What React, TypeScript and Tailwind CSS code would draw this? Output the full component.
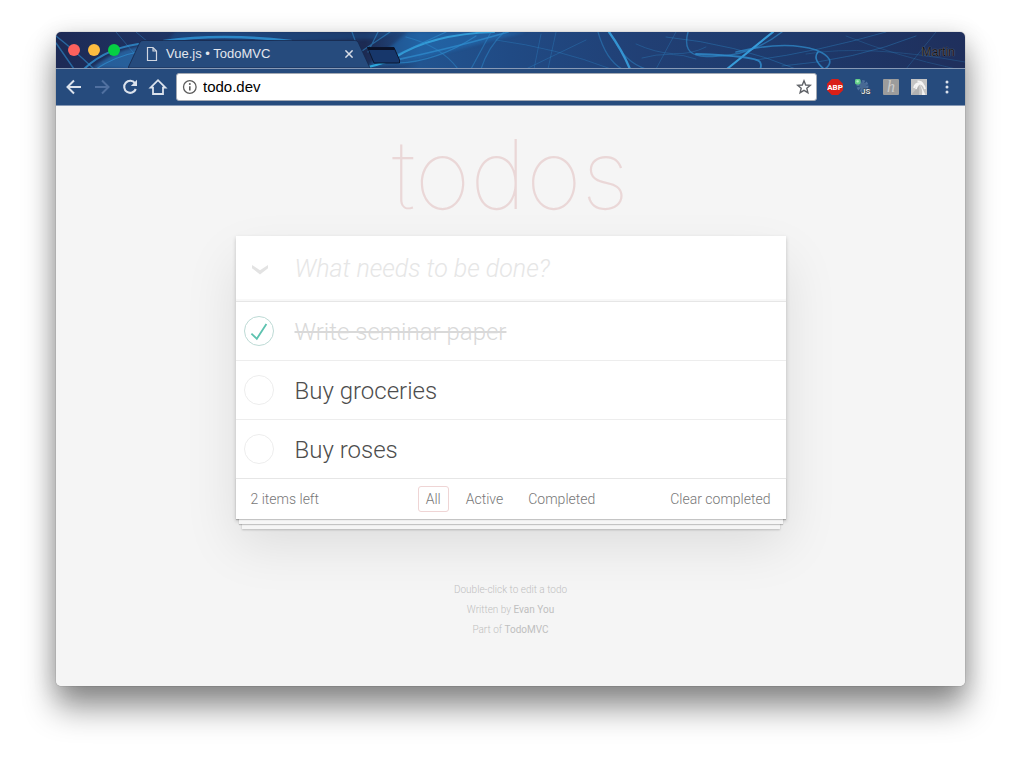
import { useState } from "react";

type Todo = { id: number; title: string; done: boolean };
type Filter = "All" | "Active" | "Completed";

const FILTERS: Filter[] = ["All", "Active", "Completed"];

function StripArtwork() {
  return (
    <svg
      className="absolute inset-0 h-full w-full"
      viewBox="0 0 909 37"
      preserveAspectRatio="xMinYMin slice"
      aria-hidden="true"
    >
      <defs>
        <linearGradient id="sky" x1="0" x2="1" y1="0" y2="0">
          <stop offset="0" stopColor="#1d2a55" />
          <stop offset="0.2" stopColor="#1f3a6c" />
          <stop offset="0.34" stopColor="#1c2a52" />
          <stop offset="0.4" stopColor="#225490" />
          <stop offset="0.5" stopColor="#204a84" />
          <stop offset="0.65" stopColor="#213f74" />
          <stop offset="0.8" stopColor="#1e3a6c" />
          <stop offset="1" stopColor="#1f2f5c" />
        </linearGradient>
        <filter id="soft" x="-5%" y="-50%" width="110%" height="200%">
          <feGaussianBlur stdDeviation="1.6" />
        </filter>
        <filter id="strand" x="-5%" y="-50%" width="110%" height="200%">
          <feGaussianBlur stdDeviation="0.6" />
        </filter>
      </defs>
      <rect width="909" height="37" fill="url(#sky)" />
      <path d="M308 37 L352 0 H470 L345 32 Z" fill="#2470b5" opacity=".5" filter="url(#soft)" />
      <path d="M36 36 Q62 16 88 14 L75 37 Z" fill="#2d7fc4" opacity=".6" filter="url(#soft)" />
      <path d="M110 9 Q160 2 240 9 L320 7 L340 0 H120Z" fill="#1f5a98" opacity=".4" filter="url(#soft)" />
      <g fill="none" stroke="#2f8fd0" strokeLinecap="round" filter="url(#strand)">
        <path d="M0 11 L18 37 M0 4 Q18 18 38 37" strokeWidth="1.4" opacity=".6" />
        <path d="M28 37 Q52 14 92 11" strokeWidth="2" opacity=".8" />
        <path d="M40 37 Q60 24 82 20" strokeWidth="1.2" opacity=".7" />
        <path d="M60 0 L82 26 M80 0 L92 10" strokeWidth="1" opacity=".4" />
        <path d="M108 9 Q165 1 235 9" strokeWidth="2.4" opacity=".9" />
        <path d="M303 21 L334 0 M312 20 L322 0 M296 0 L304 22" strokeWidth="1.2" opacity=".55" />
        <path d="M306 36 Q320 34 338 27" strokeWidth="2.4" stroke="#2fb0e4" opacity=".9" />
        <path d="M338 26 Q375 2 438 0" strokeWidth="2.2" stroke="#38b0e8" opacity=".75" />
        <path d="M340 28 Q405 14 452 0" strokeWidth="1.8" opacity=".7" />
        <path d="M338 24 L390 0 M342 31 Q380 30 420 4" strokeWidth="1.2" opacity=".6" />
        <path d="M350 5 Q385 14 402 37 M415 37 L435 0 M425 37 Q432 15 448 0" strokeWidth="1.2" opacity=".45" />
        <path d="M470 37 L530 8 M485 2 L478 37 M500 0 L492 37 M440 8 Q500 16 555 37" strokeWidth="1" opacity=".3" />
        <path d="M553 0 Q566 18 574 37" strokeWidth="2.2" stroke="#3aa6e4" opacity=".85" />
        <path d="M556 4 Q568 30 590 37 M542 0 Q550 28 566 37" strokeWidth="1.2" opacity=".45" />
        <path d="M586 26 Q615 18 640 27 M600 37 L620 0 M580 12 Q620 30 650 15" strokeWidth="1" opacity=".3" />
        <path d="M632 0 Q626 22 645 24 Q690 28 726 0" strokeWidth="1.4" opacity=".6" />
        <path d="M671 37 L717 0" strokeWidth="2.2" stroke="#3aa6e4" opacity=".9" />
        <path d="M640 22 Q700 24 704 30 Q706 34 704 37" strokeWidth="1.8" opacity=".8" />
        <path d="M680 20 Q730 8 760 18 Q782 27 769 37" strokeWidth="1.6" opacity=".7" />
        <path d="M762 20 Q756 27 768 37" strokeWidth="1.6" opacity=".8" />
        <path d="M610 5 Q680 12 740 37 M700 28 Q760 20 830 0 M726 34 Q800 28 860 4" strokeWidth="1" opacity=".35" />
        <path d="M750 22 Q810 12 909 30 M790 4 Q840 24 900 37 M850 37 L880 0" strokeWidth="1" opacity=".25" />
      </g>
      <path d="M311.500 15.500 H338 L343.500 28 V31 H318 Z" fill="#17376b" stroke="#0b1730" strokeWidth="1" />
      <path d="M311.500 15.500 H338 L339 18 H312.500 Z" fill="#0a1228" />
    </svg>
  );
}

function TabStrip() {
  return (
    <div className="relative flex h-9 items-end">
      <StripArtwork />
      <div className="relative flex h-9 w-18 items-center gap-2 pl-3">
        <button aria-label="Close window" className="size-3 rounded-full bg-[#fc615d]" />
        <button aria-label="Minimise window" className="size-3 rounded-full bg-[#fdbc40]" />
        <button aria-label="Zoom window" className="size-3 rounded-full bg-[#06cf43]" />
      </div>
      <div className="relative h-7 w-61">
        <svg className="absolute inset-0 h-full w-full" viewBox="0 0 244 28" preserveAspectRatio="none" aria-hidden="true">
          <path d="M0 28 L12 2 Q13 0.500 15 0.500 H227 Q229 0.500 230 2 L242 28 Z" fill="#264b7d" stroke="#16284c" strokeWidth=".8" />
        </svg>
        <div className="relative flex h-full items-center pl-[18px] pr-[17px] text-[#e3e7ee]">
          <svg className="h-4 w-3" viewBox="0 0 12 16" fill="none" stroke="#d0d6e0" strokeWidth="1.2" aria-hidden="true">
            <path d="M1.500 1.500 H7 L10.500 5 V14.500 H1.500 Z M7 1.500 V5 H10.500" />
          </svg>
          <span className="ml-2 flex-1 text-[13px] leading-4">Vue.js • TodoMVC</span>
          <button aria-label="Close tab" className="flex size-3 items-center justify-center">
            <svg className="size-2" viewBox="0 0 8 8" stroke="#d8dde6" strokeWidth="1.5" aria-hidden="true">
              <path d="M0.400 0.400 L7.600 7.600 M7.600 0.400 L0.400 7.600" />
            </svg>
          </button>
        </div>
      </div>
      <span className="relative mb-2 ml-auto mr-2.5 text-[12px] leading-4 text-[#10131a] [text-shadow:0_0_1px_#a8a294]">Martin</span>
    </div>
  );
}

function Toolbar() {
  return (
    <div className="flex h-9 items-center bg-[#264b7d] pl-2 pr-2.5">
      <div className="flex items-center gap-2">
        <button aria-label="Back" className="size-5">
          <svg viewBox="0 0 20 20" fill="none" stroke="#dbe2ec" strokeWidth="2" aria-hidden="true">
            <path d="M17 10 H4 M10 3.500 L3.500 10 L10 16.500" />
          </svg>
        </button>
        <button aria-label="Forward" className="size-5">
          <svg viewBox="0 0 20 20" fill="none" stroke="#5070a0" strokeWidth="2" aria-hidden="true">
            <path d="M3 10 H16 M10 3.500 L16.500 10 L10 16.500" />
          </svg>
        </button>
        <button aria-label="Reload" className="size-5">
          <svg viewBox="0 0 20 20" fill="none" aria-hidden="true">
            <path d="M15 6.200 A6 6 0 1 0 15.800 12" stroke="#dbe2ec" strokeWidth="2.1" />
            <path d="M17 2.800 V9 H10.800 Z" fill="#dbe2ec" />
          </svg>
        </button>
        <button aria-label="Home" className="size-5">
          <svg viewBox="0 0 20 20" fill="none" stroke="#dbe2ec" strokeWidth="1.8" aria-hidden="true">
            <path d="M2.600 10.600 L10 3.200 L17.400 10.600 H15 V17 H5 V10.600 Z" />
          </svg>
        </button>
      </div>
      <div className="ml-2 flex h-7 flex-1 items-center gap-1 rounded-[3px] border border-[#a3a9b3] bg-white px-1">
        <svg className="size-4" viewBox="0 0 16 16" fill="none" aria-hidden="true">
          <circle cx="8.800" cy="8" r="6.300" stroke="#5c5c5c" strokeWidth="1.3" />
          <path d="M8.800 7.200 V11.500" stroke="#5c5c5c" strokeWidth="1.6" />
          <circle cx="8.800" cy="5" r="1" fill="#5c5c5c" />
        </svg>
        <input
          aria-label="Address"
          defaultValue="todo.dev"
          className="min-w-0 flex-1 bg-transparent px-0.5 text-[15px] leading-5 text-black outline-none"
        />
        <button aria-label="Bookmark this page" className="size-4">
          <svg viewBox="0 0 16 16" fill="none" stroke="#606368" strokeWidth="1.4" aria-hidden="true">
            <path d="M8 1.800 L9.700 6 L14.300 6.300 L10.800 9.200 L11.900 13.700 L8 11.300 L4.100 13.700 L5.200 9.200 L1.700 6.300 L6.300 6 Z" />
          </svg>
        </button>
      </div>
      <div className="ml-2.5 flex items-center gap-3">
        <button aria-label="Adblock Plus" className="size-4">
          <svg viewBox="0 0 16 16" aria-hidden="true">
            <path d="M4.800 0 H11.200 L16 4.800 V11.200 L11.200 16 H4.800 L0 11.200 V4.800 Z" fill="#d91f17" />
            <text x="8" y="11" textAnchor="middle" fontSize="8" fontWeight="700" fontFamily="Roboto, sans-serif" fill="#fff">ABP</text>
          </svg>
        </button>
        <button aria-label="Script switcher" className="size-4">
          <svg viewBox="0 0 16 16" aria-hidden="true">
            <circle cx="7.500" cy="7" r="4.500" fill="none" stroke="#4f709e" strokeWidth="3" strokeDasharray="2.400 1" />
            <circle cx="8" cy="7" r="3.400" fill="#476994" />
            <rect x="0" y="0" width="5.500" height="5.500" rx="1.400" fill="#63cf88" />
            <rect x="1.400" y="1.200" width="2.400" height="2.400" rx="1" fill="#b4efc4" />
            <text x="15.500" y="15" textAnchor="end" fontSize="8" fontWeight="700" fontFamily="Roboto, sans-serif" fill="#dfe2e6" stroke="#303846" strokeWidth="1" paintOrder="stroke">JS</text>
          </svg>
        </button>
        <button aria-label="Honey" className="size-4 rounded-[1px] bg-[#9c9c9c]">
          <svg viewBox="0 0 16 16" aria-hidden="true">
            <text x="8" y="13" textAnchor="middle" fontSize="16" fontStyle="italic" fontFamily="Liberation Serif, serif" fill="#cdcdcd">h</text>
          </svg>
        </button>
        <button aria-label="Palm" className="size-4 bg-[#c4c4c4]">
          <svg viewBox="0 0 16 16" fill="none" aria-hidden="true">
            <path d="M0 16 L8 7 V16 Z" fill="#b2b2b2" />
            <path d="M3 9 Q4 4.500 8 4.500 Q13 4.500 14 10 M8 4.500 Q5.500 7 5 10 M6.500 2.500 Q10 2 12 5" stroke="#f4f4f4" strokeWidth="1.800" />
            <path d="M8.500 5 Q11 8 14.500 16 H11 Q12 11 8.500 5 Z" fill="#f2f2f2" />
          </svg>
        </button>
        <button aria-label="Menu" className="size-4">
          <svg viewBox="0 0 16 16" fill="#dbe2ec" aria-hidden="true">
            <circle cx="8" cy="3" r="1.500" />
            <circle cx="8" cy="8" r="1.500" />
            <circle cx="8" cy="13" r="1.500" />
          </svg>
        </button>
      </div>
    </div>
  );
}

function TodoRow({ todo, onToggle }: { todo: Todo; onToggle: () => void }) {
  return (
    <li className="border-b border-[#ededed] last:border-b-0">
      <label className="flex h-[58px] cursor-pointer items-center pl-2">
        <input type="checkbox" className="peer sr-only" checked={todo.done} onChange={onToggle} />
        <svg className="size-[30px] flex-none" viewBox="0 0 30 30" fill="none" aria-hidden="true">
          <circle cx="15" cy="15" r="14.500" stroke={todo.done ? "#bddad5" : "#ededed"} />
          {todo.done && <path d="M22.400 8 L12.800 22.800 L7.400 17.600" stroke="#5dc2af" strokeWidth="1.800" />}
        </svg>
        <span
          className={
            todo.done
              ? "ml-[21px] pt-0.5 text-[24px] leading-7 text-[#d9d9d9] line-through"
              : "ml-[21px] pt-0.5 text-[24px] leading-7 text-[#4d4d4d]"
          }
        >
          {todo.title}
        </span>
      </label>
    </li>
  );
}

function TodoApp() {
  const [todos, setTodos] = useState<Todo[]>([
    { id: 1, title: "Write seminar paper", done: true },
    { id: 2, title: "Buy groceries", done: false },
    { id: 3, title: "Buy roses", done: false },
  ]);
  const [filter, setFilter] = useState<Filter>("All");
  const [draft, setDraft] = useState("");

  const left = todos.filter((t) => !t.done).length;
  const shown = todos.filter((t) => filter === "All" || (filter === "Completed") === t.done);
  const toggle = (id: number) => setTodos(todos.map((t) => (t.id === id ? { ...t, done: !t.done } : t)));

  return (
    <main className="flex flex-col items-center bg-[#f5f5f5] px-6 pb-[46px] font-light [font-family:Roboto,'Liberation_Sans',sans-serif]">
      <h1 className="h-[130px] text-[96px] font-thin leading-[136px] text-[#ead7d7] [font-family:Inter,sans-serif]">todos</h1>
      <section className="w-full max-w-[550px] bg-white shadow-[0_2px_4px_rgba(0,0,0,0.2),0_25px_50px_rgba(0,0,0,0.1)]">
        <form
          className="flex h-[65px] items-center pl-4 shadow-[inset_0_-2px_1px_rgba(0,0,0,0.03)]"
          onSubmit={(e) => {
            e.preventDefault();
            if (draft.trim()) setTodos([...todos, { id: Date.now(), title: draft.trim(), done: false }]);
            setDraft("");
          }}
        >
          <button
            type="button"
            aria-label="Mark all as complete"
            className="h-4 w-4"
            onClick={() => setTodos(todos.map((t) => ({ ...t, done: left > 0 })))}
          >
            <svg viewBox="0 0 16 16" fill="#e3e3e3" aria-hidden="true">
              <path d="M0 4 L8 9.200 L16 4 V7.200 L8 13.400 L0 7.200 Z" />
            </svg>
          </button>
          <input
            aria-label="New todo"
            placeholder="What needs to be done?"
            value={draft}
            onChange={(e) => setDraft(e.target.value)}
            className="ml-[27px] min-w-0 flex-1 text-[25px] leading-8 text-[#4d4d4d] outline-none placeholder:italic placeholder:text-[#e6e6e6]"
          />
        </form>
        <ul className="border-t border-[#e6e6e6]">
          {shown.map((t) => (
            <TodoRow key={t.id} todo={t} onToggle={() => toggle(t.id)} />
          ))}
        </ul>
        <footer className="grid h-[41px] grid-cols-[1fr_auto_1fr] items-center border-t border-[#e6e6e6] px-[15px] text-[14px] leading-5 text-[#777] shadow-[0_1px_1px_rgba(0,0,0,0.2),0_8px_0_-3px_#f6f6f6,0_9px_1px_-3px_rgba(0,0,0,0.2),0_16px_0_-6px_#f6f6f6,0_17px_2px_-6px_rgba(0,0,0,0.2)]">
          <span>{left} items left</span>
          <nav className="flex gap-[9px]">
            {FILTERS.map((f) => (
              <a
                key={f}
                href={"#" + f.toLowerCase()}
                onClick={() => setFilter(f)}
                className={
                  f === filter
                    ? "rounded-[3px] border border-[#efd5d5] px-[7px] py-0.5"
                    : "rounded-[3px] border border-transparent px-[7px] py-0.5"
                }
              >
                {f}
              </a>
            ))}
          </nav>
          <button className="justify-self-end" onClick={() => setTodos(todos.filter((t) => !t.done))}>
            Clear completed
          </button>
        </footer>
      </section>
      <footer className="mt-[61px] text-center text-[10px] leading-5 text-[#bfbfbf]">
        <p>Double-click to edit a todo</p>
        <p>
          Written by <a href="#evan" className="font-normal">Evan You</a>
        </p>
        <p>
          Part of <a href="#todomvc" className="font-normal">TodoMVC</a>
        </p>
      </footer>
    </main>
  );
}

export default function App() {
  return (
    <div className="bg-white px-14 pb-20 pt-8 [font-family:'Liberation_Sans',Arial,sans-serif]">
      <div className="overflow-hidden rounded-[5px] bg-[#f5f5f5] shadow-[0_0_1px_rgba(0,0,0,0.6),0_22px_32px_rgba(0,0,0,0.42),0_4px_24px_rgba(0,0,0,0.16)]">
        <header>
          <TabStrip />
          <div className="border-y border-[#8799b5]">
            <Toolbar />
          </div>
        </header>
        <TodoApp />
      </div>
    </div>
  );
}
